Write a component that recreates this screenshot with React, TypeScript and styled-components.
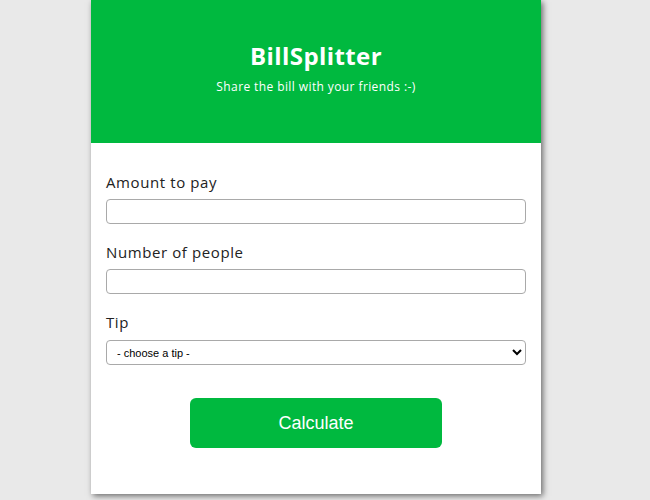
import React from "react";
import styled, { createGlobalStyle } from "styled-components";

const GlobalStyle = createGlobalStyle`
  html, body {
    margin: 0;
    padding: 0;
    background: #e9e9e9;
  }
  body {
    font-family: "Open Sans", "DejaVu Sans", sans-serif;
  }
`;

const Page = styled.div`
  width: 650px;
  height: 500px;
  overflow: hidden;
  display: flex;
  justify-content: flex-start;
  padding-left: 91px;
  box-sizing: border-box;
`;

const Card = styled.div`
  width: 450px;
  height: 494px;
  background: #ffffff;
  box-shadow: 2px 2px 6px rgba(0, 0, 0, 0.55);
  display: flex;
  flex-direction: column;
`;

const Header = styled.header`
  height: 143px;
  background: #00b93f;
  color: #ffffff;
  display: flex;
  flex-direction: column;
  align-items: center;
  padding-top: 40px;
  box-sizing: border-box;
`;

const Title = styled.h1`
  margin: 0;
  font-family: "Open Sans", sans-serif;
  font-weight: 700;
  font-size: 24px;
  line-height: 32px;
  letter-spacing: 0.4px;
`;

const Subtitle = styled.p`
  margin: 7px 0 0;
  font-size: 12px;
  line-height: 16px;
  font-weight: 500;
  letter-spacing: 0.4px;
`;

const Form = styled.form`
  display: flex;
  flex-direction: column;
  padding: 29px 15px 0;
`;

const Field = styled.div<{ $gap?: number }>`
  display: flex;
  flex-direction: column;
  margin-bottom: ${(p) => p.$gap ?? 18}px;
`;

const Label = styled.label<{ $gap?: number }>`
  font-size: 15px;
  line-height: 20px;
  color: #222222;
  letter-spacing: 0.6px;
  margin-bottom: ${(p) => p.$gap ?? 7}px;
`;

const Input = styled.input`
  box-sizing: border-box;
  width: 420px;
  height: 25px;
  border: 1px solid #a9a9a9;
  border-radius: 4px;
  padding: 0 8px;
  font-size: 13px;
  outline: none;
`;

const Select = styled.select`
  box-sizing: border-box;
  width: 420px;
  height: 25px;
  border: 1px solid #a9a9a9;
  border-radius: 4px;
  padding: 0 6px;
  font-family: "Liberation Sans", Arial, sans-serif;
  font-size: 11px;
  color: #000;
  background: #fff;
`;

const ButtonRow = styled.div`
  display: flex;
  justify-content: center;
  margin-top: 15px;
`;

const Button = styled.button`
  width: 252px;
  height: 50px;
  border: none;
  border-radius: 6px;
  background: #00b93f;
  color: #ffffff;
  font-family: "Liberation Sans", Arial, sans-serif;
  font-size: 18px;
  cursor: pointer;
`;

export default function App() {
  return (
    <>
      <GlobalStyle />
      <Page>
        <Card>
          <Header>
            <Title>BillSplitter</Title>
            <Subtitle>Share the bill with your friends :-)</Subtitle>
          </Header>
          <Form onSubmit={(e) => e.preventDefault()}>
            <Field>
              <Label htmlFor="amount">Amount to pay</Label>
              <Input id="amount" type="text" />
            </Field>
            <Field>
              <Label htmlFor="people">Number of people</Label>
              <Input id="people" type="text" />
            </Field>
            <Field>
              <Label htmlFor="tip" $gap={8}>Tip</Label>
              <Select id="tip" defaultValue="">
                <option value="">- choose a tip -</option>
                <option value="5">5%</option>
                <option value="10">10%</option>
                <option value="15">15%</option>
                <option value="20">20%</option>
              </Select>
            </Field>
            <ButtonRow>
              <Button type="submit">Calculate</Button>
            </ButtonRow>
          </Form>
        </Card>
      </Page>
    </>
  );
}
